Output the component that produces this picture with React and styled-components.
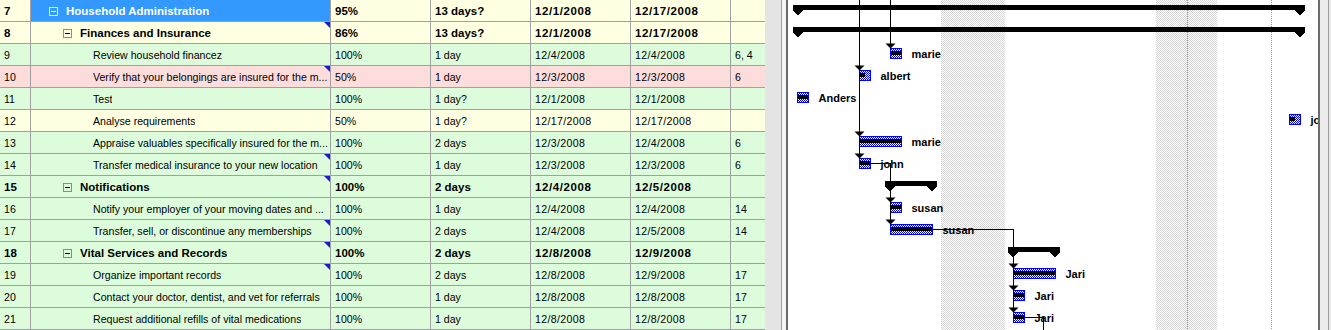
import React from 'react';
import styled, { createGlobalStyle } from 'styled-components';

const GlobalStyle = createGlobalStyle`
  html, body { margin: 0; padding: 0; background: #fff; }
  body { font-family: "Liberation Sans", Arial, sans-serif; }
`;

const ROW = 22;
const OX = 788;

const colors = {
  yellow: '#ffffe1',
  green: '#dcfcdc',
  pink: '#fddcdc',
  selected: '#3399ff',
  line: '#a0a0a0',
};

const rows = [
  { id: 7, name: 'Household Administration', pct: '95%', dur: '13 days?', start: '12/1/2008', finish: '12/17/2008', pred: '', lvl: 0, sum: true, bg: 'yellow', sel: true },
  { id: 8, name: 'Finances and Insurance', pct: '86%', dur: '13 days?', start: '12/1/2008', finish: '12/17/2008', pred: '', lvl: 1, sum: true, bg: 'yellow', note: true },
  { id: 9, name: 'Review household financez', pct: '100%', dur: '1 day', start: '12/4/2008', finish: '12/4/2008', pred: '6, 4', lvl: 2, bg: 'green' },
  { id: 10, name: 'Verify that your belongings are insured for the m...', pct: '50%', dur: '1 day', start: '12/3/2008', finish: '12/3/2008', pred: '6', lvl: 2, bg: 'pink', note: true },
  { id: 11, name: 'Test', pct: '100%', dur: '1 day?', start: '12/1/2008', finish: '12/1/2008', pred: '', lvl: 2, bg: 'green' },
  { id: 12, name: 'Analyse requirements', pct: '50%', dur: '1 day?', start: '12/17/2008', finish: '12/17/2008', pred: '', lvl: 2, bg: 'yellow' },
  { id: 13, name: 'Appraise valuables specifically insured for the m...', pct: '100%', dur: '2 days', start: '12/3/2008', finish: '12/4/2008', pred: '6', lvl: 2, bg: 'green' },
  { id: 14, name: 'Transfer medical insurance to your new location', pct: '100%', dur: '1 day', start: '12/3/2008', finish: '12/3/2008', pred: '6', lvl: 2, bg: 'green', note: true },
  { id: 15, name: 'Notifications', pct: '100%', dur: '2 days', start: '12/4/2008', finish: '12/5/2008', pred: '', lvl: 1, sum: true, bg: 'green', note: true },
  { id: 16, name: 'Notify your employer of your moving dates and ...', pct: '100%', dur: '1 day', start: '12/4/2008', finish: '12/4/2008', pred: '14', lvl: 2, bg: 'green' },
  { id: 17, name: 'Transfer, sell, or discontinue any memberships', pct: '100%', dur: '2 days', start: '12/4/2008', finish: '12/5/2008', pred: '14', lvl: 2, bg: 'green', note: true },
  { id: 18, name: 'Vital Services and Records', pct: '100%', dur: '2 days', start: '12/8/2008', finish: '12/9/2008', pred: '', lvl: 1, sum: true, bg: 'green', note: true },
  { id: 19, name: 'Organize important records', pct: '100%', dur: '2 days', start: '12/8/2008', finish: '12/9/2008', pred: '17', lvl: 2, bg: 'green', note: true },
  { id: 20, name: 'Contact your doctor, dentist, and vet for referrals', pct: '100%', dur: '1 day', start: '12/8/2008', finish: '12/8/2008', pred: '17', lvl: 2, bg: 'green' },
  { id: 21, name: 'Request additional refills of vital medications', pct: '100%', dur: '1 day', start: '12/8/2008', finish: '12/8/2008', pred: '17', lvl: 2, bg: 'green' },
];

// page x coordinates measured from the timeline (day = ~31px, work 8:00-17:00)
const tasks = [
  { id: 9, x1: 890, x2: 902, pct: 100, label: 'marie', arrow: true },
  { id: 10, x1: 859, x2: 871, pct: 50, label: 'albert', arrow: true },
  { id: 11, x1: 797, x2: 809, pct: 100, label: 'Anders' },
  { id: 12, x1: 1289, x2: 1301, pct: 50, label: 'john' },
  { id: 13, x1: 859, x2: 902, pct: 100, label: 'marie', arrow: true },
  { id: 14, x1: 859, x2: 871, pct: 100, label: 'john', arrow: true },
  { id: 16, x1: 890, x2: 902, pct: 100, label: 'susan', arrow: true },
  { id: 17, x1: 890, x2: 933, pct: 100, label: 'susan', arrow: true },
  { id: 19, x1: 1013, x2: 1056, pct: 100, label: 'Jari', arrow: true },
  { id: 20, x1: 1013, x2: 1025, pct: 100, label: 'Jari', arrow: true },
  { id: 21, x1: 1013, x2: 1025, pct: 100, label: 'Jari', arrow: true },
];

const summaries = [
  { id: 7, x1: 793, x2: 1305 },
  { id: 8, x1: 793, x2: 1305 },
  { id: 15, x1: 885, x2: 937 },
  { id: 18, x1: 1008, x2: 1060 },
];

const weekends = [
  [941, 1005],
  [1156, 1217],
];

const rowTop = id => (id - 7) * ROW;
const gx = x => x - OX;

export default function App() {
  return (
    <>
      <GlobalStyle />
      <Page>
        <Grid>
          {rows.map(r => (
            <React.Fragment key={r.id}>
              <Cell $bg={colors[r.bg]} $bold={r.sum}>{r.id}</Cell>
              <NameCell $bg={colors[r.bg]} $bold={r.sum} $sel={r.sel} $indent={18 + r.lvl * 14 + (r.sum ? 0 : 16)}>
                {r.sum && <Expander $sel={r.sel} />}
                <NameText>{r.name}</NameText>
                {r.note && <NoteMark />}
              </NameCell>
              <Cell $bg={colors[r.bg]} $bold={r.sum}>{r.pct}</Cell>
              <Cell $bg={colors[r.bg]} $bold={r.sum}>{r.dur}</Cell>
              <Cell $bg={colors[r.bg]} $bold={r.sum} $date>{r.start}</Cell>
              <Cell $bg={colors[r.bg]} $bold={r.sum} $date>{r.finish}</Cell>
              <Cell $bg={colors[r.bg]} $bold={r.sum} $last>{r.pred}</Cell>
            </React.Fragment>
          ))}
        </Grid>
        <Splitter>
          <SplitGrip />
          <SplitEdge />
        </Splitter>
        <ChartPanel>
          <Gantt />
        </ChartPanel>
        <RightFrame>
          <FrameEdge />
        </RightFrame>
      </Page>
    </>
  );
}

function Gantt() {
  const W = 530;
  const H = 330;
  return (
    <svg width={W} height={H} viewBox={`0 0 ${W} ${H}`} shapeRendering="crispEdges">
      <defs>
        <pattern id="chk" width="2" height="2" patternUnits="userSpaceOnUse">
          <rect width="2" height="2" fill="#ffffff" />
          <rect width="1" height="1" fill="#0000ff" />
          <rect x="1" y="1" width="1" height="1" fill="#0000ff" />
        </pattern>
        <pattern id="off" width="2" height="2" patternUnits="userSpaceOnUse">
          <rect width="2" height="2" fill="#ffffff" />
          <rect width="1" height="1" fill="#d6d6d6" />
          <rect x="1" y="1" width="1" height="1" fill="#d6d6d6" />
        </pattern>
      </defs>

      {weekends.map(([a, b]) => (
        <rect key={a} x={gx(a)} y="0" width={b - a} height={H} fill="url(#off)" />
      ))}
      {[1187, 1271].map(x => (
        <line key={x} x1={gx(x) + 0.5} y1="0" x2={gx(x) + 0.5} y2={H} stroke="#9a9a9a" strokeDasharray="1 1" />
      ))}

      {summaries.map(s => {
        const t = rowTop(s.id);
        const a = gx(s.x1);
        const b = gx(s.x2);
        return (
          <g key={s.id} fill="#000">
            <rect x={a} y={t + 5} width={b - a} height="5" />
            <polygon points={`${a},${t + 10} ${a + 10},${t + 10} ${a + 10},${t + 11} ${a + 5},${t + 15} ${a},${t + 11}`} />
            <polygon points={`${b - 10},${t + 10} ${b},${t + 10} ${b},${t + 11} ${b - 5},${t + 15} ${b - 10},${t + 11}`} />
          </g>
        );
      })}

      {tasks.map(k => {
        const t = rowTop(k.id);
        const a = gx(k.x1);
        const w = k.x2 - k.x1;
        return (
          <g key={k.id}>
            <rect x={a + 0.5} y={t + 4.5} width={w - 1} height="10" fill="url(#chk)" stroke="#0000ff" />
            <rect x={a + 1} y={t + 7} width={Math.round(((w - 2) * k.pct) / 100)} height="4" fill="#000" />
            <text x={gx(k.x2) + 9.5} y={t + 14} fontFamily='"Liberation Sans", Arial, sans-serif' fontWeight="700" fontSize="11" fill="#000">
              {k.label}
            </text>
          </g>
        );
      })}

      <g stroke="#000" fill="none">
        <path d={`M${gx(859) + 0.5} 0 V${rowTop(14)}`} />
        <path d={`M${gx(890) + 0.5} 0 V${rowTop(9)}`} />
        <path d={`M${gx(871)} ${rowTop(14) + 9.5} H${gx(890) + 0.5} V${rowTop(17)}`} />
        <path d={`M${gx(933)} ${rowTop(17) + 9.5} H${gx(1013) + 0.5} V${rowTop(21)}`} />
        <path d={`M${gx(1025)} ${rowTop(21) + 9.5} H${gx(1043) + 0.5} V${H}`} />
      </g>

      {tasks.filter(k => k.arrow).map(k => {
        const t = rowTop(k.id);
        const c = gx(k.x1) + 0.5;
        return <polygon key={k.id} points={`${c - 5},${t - 0.5} ${c + 5},${t - 0.5} ${c},${t + 4.5}`} fill="#000" shapeRendering="auto" />;
      })}
    </svg>
  );
}

const Page = styled.div`
  display: flex;
  width: 1331px;
  height: 330px;
  overflow: hidden;
  background: #fff;
`;

const Grid = styled.div`
  flex: none;
  display: grid;
  grid-template-columns: 31px 300px 100px 100px 100px 100px 34px;
  grid-auto-rows: ${ROW}px;
  width: 765px;
`;

const Cell = styled.div`
  box-sizing: border-box;
  position: relative;
  height: ${ROW}px;
  padding: 2px 0 0 4px;
  border-bottom: 1px solid ${colors.line};
  border-right: ${p => (p.$last ? 'none' : `1px solid ${colors.line}`)};
  background: ${p => (p.$sel ? colors.selected : p.$bg)};
  color: ${p => (p.$sel ? '#fff' : '#000')};
  font-size: ${p => (p.$bold ? '11.5px' : '10.6px')};
  font-weight: ${p => (p.$bold ? 700 : 400)};
  letter-spacing: ${p => (p.$date ? (p.$bold ? '0.6px' : '0.35px') : 'normal')};
  line-height: 19px;
  white-space: nowrap;
  overflow: hidden;
`;

const NameCell = styled(Cell)`
  display: flex;
  align-items: flex-start;
  padding-left: ${p => p.$indent}px;
`;

const Expander = styled.span`
  flex: none;
  box-sizing: border-box;
  position: relative;
  width: 9px;
  height: 9px;
  margin: 5px 8px 0 0;
  border: 1px solid ${p => (p.$sel ? '#dfe9f5' : '#8c8c8c')};
  background: ${p => (p.$sel ? '#3399ff' : 'transparent')};

  &::after {
    content: '';
    position: absolute;
    left: 1px;
    top: 3px;
    width: 5px;
    height: 1px;
    background: ${p => (p.$sel ? '#ffffff' : '#000000')};
  }
`;

const NameText = styled.span`
  min-width: 0;
  overflow: hidden;
  text-overflow: ellipsis;
`;

const NoteMark = styled.span`
  position: absolute;
  top: 0;
  right: 0;
  width: 0;
  height: 0;
  border-top: 6px solid #1a1ad6;
  border-left: 6px solid transparent;
`;

const Splitter = styled.div`
  flex: none;
  display: flex;
  width: 21px;
  background: #e4e4e4;
  border-right: 2px solid #6b6b6b;
`;

const SplitGrip = styled.div`
  width: 16px;
  border-right: 1px solid ${colors.line};
`;

const SplitEdge = styled.div`
  flex: 1;
  background: #f5f5f5;
`;

const ChartPanel = styled.div`
  flex: none;
  width: 530px;
  height: 330px;
  overflow: hidden;
  background: #fff;
`;

const RightFrame = styled.div`
  flex: none;
  display: flex;
  width: 11px;
  border-left: 2px solid #6b6b6b;
  background: #ebebeb;
`;

const FrameEdge = styled.div`
  width: 8px;
  border-right: 1px solid #9a9a9a;
`;
